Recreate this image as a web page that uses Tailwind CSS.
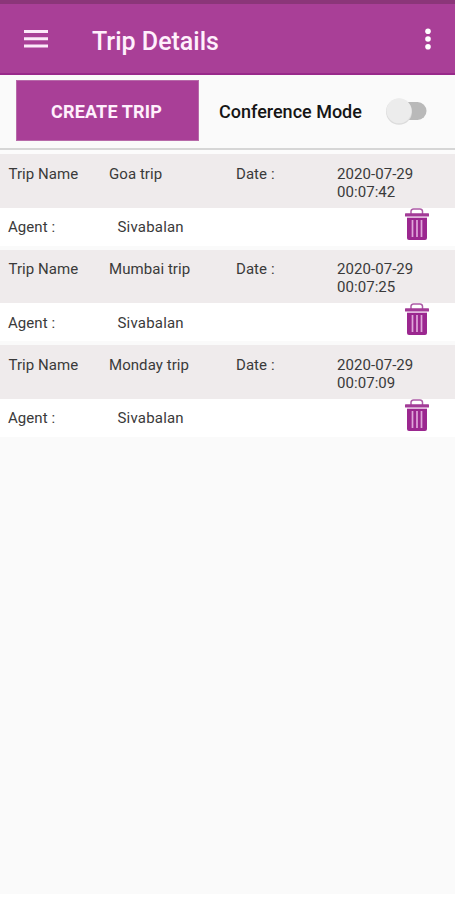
<!DOCTYPE html>
<html lang="en">
<head>
<meta charset="utf-8">
<title>Trip Details</title>
<script src="https://cdn.jsdelivr.net/npm/@tailwindcss/browser@4"></script>
</head>
<body class="bg-white">
<svg class="hidden">
  <symbol id="trash" viewBox="0 0 24 33">
    <path d="M6 6V3.200Q6.300 1 8.500 1h6.500q2.200 0 2.500 2.200V6" fill="none" stroke="#ad5ba6" stroke-width="1.500"/>
    <rect x="0" y="5.300" width="24" height="3.300" rx=".6" fill="#a33b97"/>
    <path d="M2 10h20v20q0 2-2 2H4q-2 0-2-2z" fill="#9b278f"/>
    <path d="M7.500 12v17M12 12v17M16.500 12v17" stroke="#dfa6da" stroke-width="1.700"/>
    <path d="M2 9.500h20" stroke="#e2b5dd" stroke-width="1"/>
  </symbol>
</svg>
<div class="flex h-[894px] w-[455px] flex-col overflow-hidden bg-[#fafafa] font-[Roboto,sans-serif] text-[#3a3a3a]">
  <div class="h-1 shrink-0 bg-[#8b3679]"></div>
  <header class="flex h-[70.500px] shrink-0 items-center border-b-2 border-[#98298a] bg-[#a93f97] pt-[2px] pl-6 pr-[24px]">
    <svg class="h-[18px] w-6" viewBox="0 0 24 18" fill="#fce9f9"><path d="M0 0h24v3H0zM0 7.300h24v3H0zM0 14.600h24v3H0z"/></svg>
    <h1 class="ml-11 pt-[5.500px] text-[25px] leading-[30px] font-medium text-[#fff0fc]">Trip Details</h1>
    <svg class="ml-auto h-[22px] w-[6px]" viewBox="0 0 6 22" fill="#fff"><circle cx="3" cy="3.300" r="2.800"/><circle cx="3" cy="11" r="2.800"/><circle cx="3" cy="18.700" r="2.800"/></svg>
  </header>
  <div class="flex h-[75.500px] shrink-0 items-start border-b-2 border-[#d6d6d6] pl-4 pt-[5.500px]">
    <button class="h-[61px] w-[183px] border border-[#b76aa9] bg-[#a93f97] pt-[1px] pr-[2px] text-[18px] font-bold tracking-[0.150px] text-[#fff0fc]">CREATE TRIP</button>
    <span class="ml-5 flex h-[61px] w-[167px] items-center pt-[1px] text-[18px] font-medium whitespace-nowrap text-[#151515]">Conference Mode</span>
    <svg class="mt-[15.500px] h-[30px] w-[42px]" viewBox="0 0 42 30"><rect x="6" y="6" width="34.500" height="18" rx="9" fill="#b9b9b9"/><circle cx="13" cy="15.700" r="13" fill="#dcdcdc"/><circle cx="13" cy="14.800" r="12.500" fill="#ececec"/></svg>
  </div>
  <main id="trips" class="flex shrink-0 flex-col gap-[4px] border-t-4 border-[#fcfcfc] text-[15px] leading-[18px] tracking-[0.060px]"></main>
</div>
<script>
const trips = [['Goa trip', '00:07:42'], ['Mumbai trip', '00:07:25'], ['Monday trip', '00:07:09']];
document.getElementById('trips').innerHTML = trips.map(([name, time]) => `
  <section class="h-[91.700px]">
    <div class="flex h-[53.700px] bg-[#efebec] pl-[8.500px] pt-[10.700px]">
      <span class="w-[100.500px]">Trip Name</span><span class="w-[127px]">${name}</span><span class="w-[101px]">Date :</span><span class="w-[90px]">2020-07-29 ${time}</span>
    </div>
    <div class="flex h-[38px] bg-white pl-[8px]">
      <span class="w-[109.500px] pt-[10.300px]">Agent :</span><span class="w-[287px] pt-[10.300px] tracking-[0.200px]">Sivabalan</span><svg class="h-[33px] w-6"><use href="#trash"/></svg>
    </div>
  </section>`).join('');
</script>
</body>
</html>
